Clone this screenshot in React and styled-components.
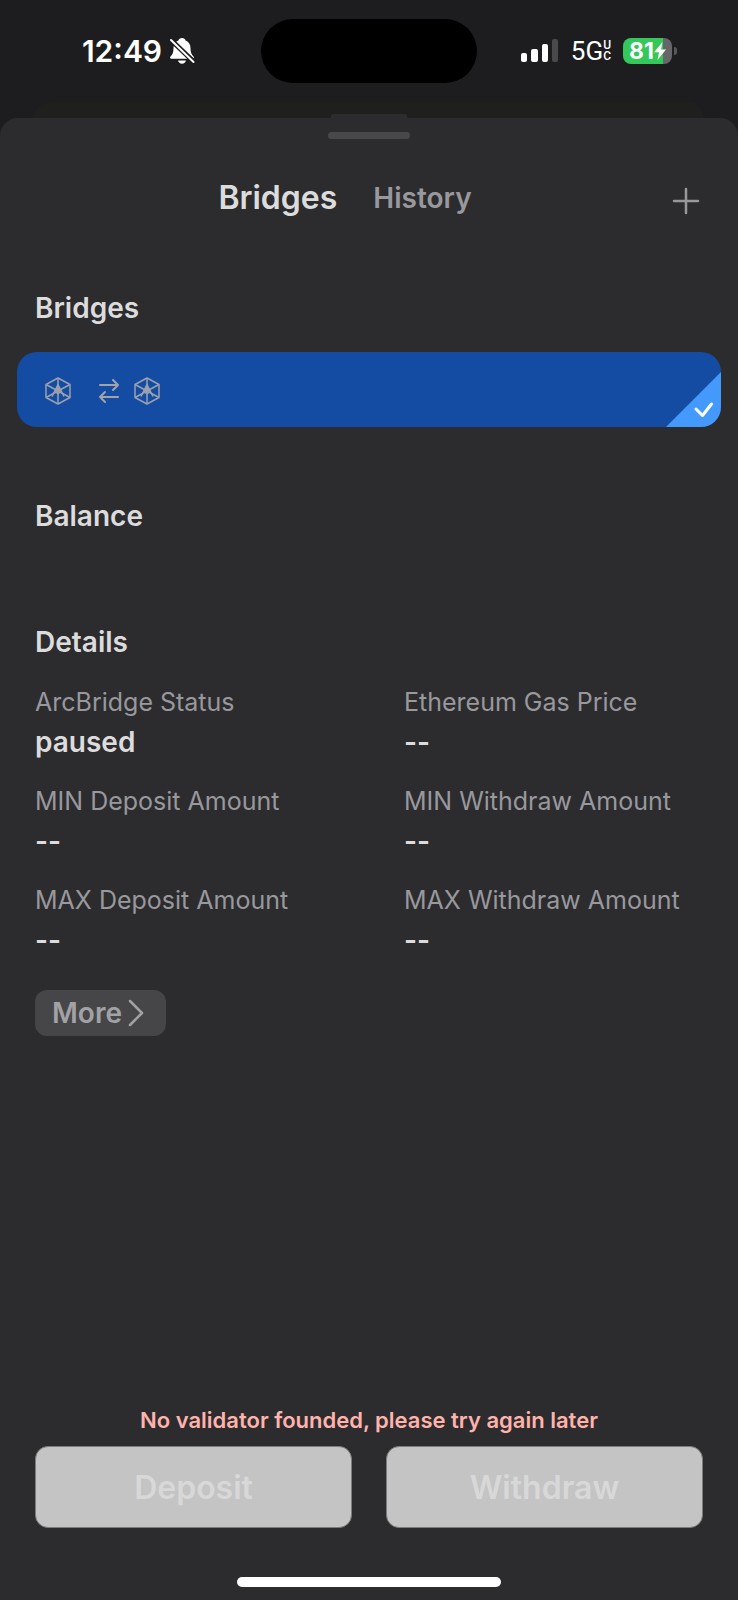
import React from 'react'
import styled, { createGlobalStyle } from 'styled-components'

const details = [
  { label: 'ArcBridge Status', value: 'paused' },
  { label: 'Ethereum Gas Price', value: '--' },
  { label: 'MIN Deposit Amount', value: '--' },
  { label: 'MIN Withdraw Amount', value: '--' },
  { label: 'MAX Deposit Amount', value: '--' },
  { label: 'MAX Withdraw Amount', value: '--' },
]

const BellOffIcon = () => (
  <svg width="26" height="28" viewBox="0 0 26 28" aria-hidden="true">
    <path
      d="M13 1c1.900 0 3.300 1 3.600 2.400C20 4.600 21.500 7.500 21.500 11c0 4.500 1 6.500 3 8.500.8.8.5 2.200-.9 2.200H2.400c-1.400 0-1.700-1.400-.9-2.200 2-2 3-4 3-8.500 0-3.500 1.500-6.400 4.900-7.600C9.700 2 11.100 1 13 1z"
      fill="#fff"
    />
    <path d="M9 23.500h8c-.4 2-2 3.200-4 3.200s-3.600-1.200-4-3.200z" fill="#fff" />
    <path d="M1 2l24 23" stroke="#1d1d1f" strokeWidth="5" />
    <path d="M2 3l22.500 22" stroke="#fff" strokeWidth="2" strokeLinecap="round" />
  </svg>
)

const SignalIcon = () => (
  <svg width="38" height="24" viewBox="0 0 38 24" aria-hidden="true">
    <rect x="0" y="14" width="6" height="9" rx="2" fill="#fff" />
    <rect x="10" y="10" width="7" height="13" rx="2" fill="#fff" />
    <rect x="21" y="5" width="6" height="18" rx="2" fill="#fff" />
    <rect x="31" y="0" width="6" height="23" rx="2" fill="#4a4a4c" />
  </svg>
)

const BoltIcon = () => (
  <svg width="12" height="18" viewBox="0 0 12 18" aria-hidden="true">
    <path d="M8.500 0L0 10.200h5L3.500 18 12 7.500H7z" fill="#fff" />
  </svg>
)

const NetworkIcon = () => (
  <svg
    width="26"
    height="28"
    viewBox="0 0 26 28"
    fill="none"
    stroke="#9aa0ad"
    strokeWidth="1.5"
    strokeLinejoin="round"
    aria-hidden="true"
  >
    <path d="M13 1l12 6.500v13L13 27 1 20.500v-13z" />
    <path d="M13 1v26M1 7.500l24 13M25 7.500l-24 13" />
    <path d="M7 19.500l6-12 6 12M10.500 14.500L13 11l2.500 3.500L13 17z" />
  </svg>
)

const SwapIcon = () => (
  <svg
    width="22"
    height="26"
    viewBox="0 0 22 26"
    fill="none"
    stroke="#a3a3a8"
    strokeWidth="2"
    strokeLinecap="round"
    strokeLinejoin="round"
    aria-hidden="true"
  >
    <path d="M2 7h18M15 2l5 5-5 5M20 19H2M7 14l-5 5 5 5" />
  </svg>
)

const PlusIcon = () => (
  <svg width="28" height="28" viewBox="0 0 28 28" aria-hidden="true">
    <path
      d="M14 2v24M2 14h24"
      stroke="#97979c"
      strokeWidth="2.5"
      strokeLinecap="round"
    />
  </svg>
)

const ChevronIcon = () => (
  <svg width="16" height="28" viewBox="0 0 16 28" aria-hidden="true">
    <path
      d="M2 2l12 12L2 26"
      fill="none"
      stroke="#a1a1a6"
      strokeWidth="2.5"
      strokeLinecap="round"
      strokeLinejoin="round"
    />
  </svg>
)

const CheckIcon = () => (
  <svg width="55" height="55" viewBox="0 0 55 55" aria-hidden="true">
    <path d="M55 0v55H0z" fill="#4499fc" />
    <path
      d="M30 37l6.500 6.500L45.500 32"
      fill="none"
      stroke="#fff"
      strokeWidth="3"
      strokeLinecap="round"
      strokeLinejoin="round"
    />
  </svg>
)

const StatusBar = () => (
  <StatusRow>
    <Clock>
      12:49
      <BellOffIcon />
    </Clock>
    <Island />
    <Indicators>
      <SignalIcon />
      <Carrier>
        5G
        <CarrierSuffix>
          <span>U</span>
          <span>C</span>
        </CarrierSuffix>
      </Carrier>
      <BatteryGroup>
        <Battery>
          81
          <BoltIcon />
        </Battery>
        <BatteryTip />
      </BatteryGroup>
    </Indicators>
  </StatusRow>
)

const App = () => (
  <Screen>
    <GlobalStyle />
    <StatusBar />
    <SheetBehind>
      <HandleBehind />
    </SheetBehind>
    <Sheet>
      <Handle />
      <Header>
        <Tabs>
          <Tab type="button" $active>
            Bridges
          </Tab>
          <Tab type="button">History</Tab>
        </Tabs>
        <AddButton type="button" aria-label="Add bridge">
          <PlusIcon />
        </AddButton>
      </Header>

      <Section>
        <SectionTitle>Bridges</SectionTitle>
        <BridgeCard type="button" aria-label="Selected bridge">
          <NetworkIcon />
          <BridgeTarget>
            <SwapIcon />
            <NetworkIcon />
          </BridgeTarget>
          <Selected>
            <CheckIcon />
          </Selected>
        </BridgeCard>
      </Section>

      <Section>
        <SectionTitle>Balance</SectionTitle>
      </Section>

      <Section>
        <SectionTitle>Details</SectionTitle>
        <DetailGrid>
          {details.map(({ label, value }) => (
            <div key={label}>
              <DetailLabel>{label}</DetailLabel>
              <DetailValue>{value}</DetailValue>
            </div>
          ))}
        </DetailGrid>
        <MoreButton type="button">
          More
          <ChevronIcon />
        </MoreButton>
      </Section>

      <Footer>
        <ErrorText>No validator founded, please try again later</ErrorText>
        <Actions>
          <ActionButton type="button" disabled>
            Deposit
          </ActionButton>
          <ActionButton type="button" disabled>
            Withdraw
          </ActionButton>
        </Actions>
        <HomeIndicator />
      </Footer>
    </Sheet>
  </Screen>
)

const GlobalStyle = createGlobalStyle`
  * {
    box-sizing: border-box;
  }

  body {
    margin: 0;
    background: #1d1d1f;
    color: #dcdcdd;
    font-family: Inter, 'Liberation Sans', sans-serif;
  }

  button {
    padding: 0;
    border: 0;
    background: none;
    color: inherit;
    font: inherit;
  }

  svg {
    display: block;
    flex-shrink: 0;
  }
`

const Screen = styled.div`
  display: flex;
  flex-direction: column;
  min-height: 100vh;
`

const StatusRow = styled.div`
  display: grid;
  grid-template-columns: 1fr 216px 1fr;
  align-items: center;
  height: 102px;
  color: #fff;
`

const Clock = styled.div`
  display: flex;
  align-items: center;
  justify-content: center;
  gap: 7px;
  padding-left: 16px;
  font-size: 30px;
  font-weight: 600;
  line-height: 36px;
`

const Island = styled.div`
  height: 64px;
  border-radius: 32px;
  background: #000;
`

const Indicators = styled.div`
  display: flex;
  align-items: center;
  justify-content: flex-end;
  gap: 12px;
  padding-right: 61px;
`

const Carrier = styled.div`
  display: flex;
  align-items: center;
  font-family: Roboto, sans-serif;
  font-size: 26px;
  line-height: 26px;
`

const CarrierSuffix = styled.span`
  display: flex;
  flex-direction: column;
  font-size: 12px;
  font-weight: 500;
  line-height: 11px;
`

const BatteryGroup = styled.div`
  display: flex;
  align-items: center;
  gap: 2px;
`

const Battery = styled.div`
  display: flex;
  align-items: center;
  justify-content: center;
  width: 49px;
  height: 26px;
  border-radius: 8px;
  background: linear-gradient(to right, #34c759 81%, #666669 81%);
  font-size: 23px;
  font-weight: 700;
  line-height: 26px;
`

const BatteryTip = styled.div`
  width: 3px;
  height: 8px;
  border-radius: 0 3px 3px 0;
  background: #58585a;
`

const SheetBehind = styled.div`
  display: flex;
  align-items: flex-end;
  justify-content: center;
  height: 16px;
  margin: 0 34px;
  border-radius: 16px 16px 0 0;
  background: #1f1f1e;
`

const HandleBehind = styled.div`
  width: 76px;
  height: 4px;
  border-radius: 2px 2px 0 0;
  background: #2c2c2e;
`

const Sheet = styled.main`
  display: flex;
  flex: 1;
  flex-direction: column;
  padding-top: 14px;
  border-radius: 18px 18px 0 0;
  background: #2c2c2e;
`

const Handle = styled.div`
  align-self: center;
  width: 82px;
  height: 7px;
  border-radius: 4px;
  background: #48484a;
`

const Header = styled.header`
  display: flex;
  align-items: flex-end;
  height: 56px;
  margin: 31px 28px 64px;
`

const Tabs = styled.nav`
  display: flex;
  flex: 1;
  align-items: center;
  justify-content: center;
  gap: 36px;
`

const Tab = styled.button`
  color: ${props => (props.$active ? `#dcdcdd` : `#98989d`)};
  font-size: ${props => (props.$active ? `32px` : `28px`)};
  font-weight: 600;
  line-height: 56px;
`

const AddButton = styled.button`
  display: flex;
  align-items: center;
  justify-content: center;
  width: 48px;
  height: 50px;
`

const Section = styled.section`
  padding: 0 35px;

  & + & {
    margin-top: 71px;
  }

  & + & + & {
    margin-top: 90px;
  }
`

const SectionTitle = styled.h2`
  margin: 0;
  font-size: 28px;
  font-weight: 600;
  line-height: 36px;
`

const BridgeCard = styled.button`
  position: relative;
  display: flex;
  align-items: center;
  gap: 27px;
  width: calc(100% + 36px);
  height: 75px;
  margin: 26px -18px 0;
  padding: 2px 28px 0;
  overflow: hidden;
  border-radius: 20px;
  background: #144ca3;
`

const BridgeTarget = styled.span`
  display: flex;
  align-items: center;
  gap: 14px;
`

const Selected = styled.span`
  position: absolute;
  right: 0;
  bottom: 0;
`

const DetailGrid = styled.dl`
  display: grid;
  grid-template-columns: 1fr 1fr;
  row-gap: 25px;
  column-gap: 70px;
  margin: 26px 0 32px;
`

const DetailLabel = styled.dt`
  color: #98989d;
  font-size: 25px;
  line-height: 32px;
  white-space: nowrap;
`

const DetailValue = styled.dd`
  margin: 6px 0 0;
  font-size: 28px;
  font-weight: 600;
  line-height: 36px;
`

const MoreButton = styled.button`
  display: flex;
  align-items: center;
  gap: 6px;
  height: 46px;
  padding: 0 22px 0 17px;
  border-radius: 12px;
  background: #464648;
  color: #a1a1a6;
  font-size: 28px;
  font-weight: 600;
`

const Footer = styled.footer`
  margin-top: auto;
  padding: 48px 35px 13px;
`

const ErrorText = styled.p`
  margin: 0 0 12px;
  color: #ffb3ab;
  font-size: 22px;
  font-weight: 600;
  line-height: 28px;
  text-align: center;
`

const Actions = styled.div`
  display: grid;
  grid-template-columns: 1fr 1fr;
  gap: 34px;
`

const ActionButton = styled.button`
  && {
    height: 82px;
    border: 1px solid #7c7c7e;
    border-radius: 13px;
    background: #c4c4c4;
    color: #d8d8d8;
    font-size: 32px;
    font-weight: 600;
  }
`

const HomeIndicator = styled.div`
  width: 264px;
  height: 10px;
  margin: 49px auto 0;
  border-radius: 5px;
  background: #fff;
`

export default App
